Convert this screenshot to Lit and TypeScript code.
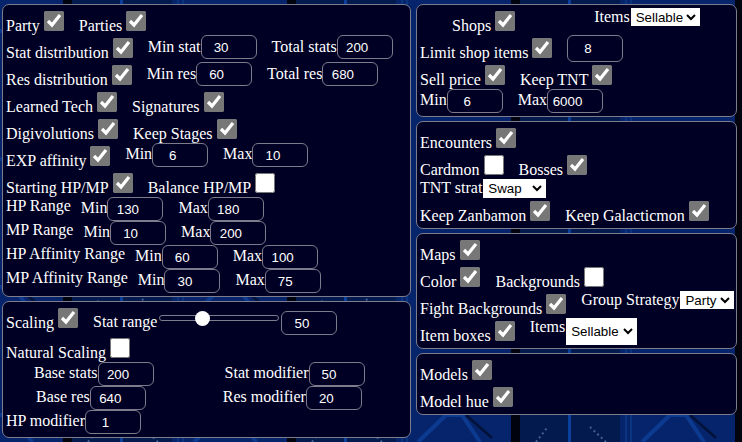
import { LitElement, html, css, svg } from "lit";
import { customElement } from "lit/decorators.js";

const cb = (on = true) => html`<input class="cb" type="checkbox" .checked=${on} />`;
const lab = (t: string, cls = "lo") => html`<label class=${cls}>${t}</label>`;
const num = (v: string, cls = "") => html`<input class="num ${cls}" type="number" .value=${v} />`;
const sel = (v: string, cls: string) => html`<select class="sel ${cls}"><option>${v}</option></select>`;

@customElement("app-root")
export class AppRoot extends LitElement {
  static styles = css`
    :host {
      display: block;
      position: relative;
      width: 742px;
      height: 442px;
      overflow: hidden;
      background: #041f5c;
      font-family: "Liberation Serif", "Times New Roman", serif;
      font-size: 16px;
      line-height: 18px;
      color: #fff;
    }
    .bg { position: absolute; inset: 0; width: 742px; height: 442px; }
    .page {
      position: relative;
      display: flex;
      align-items: flex-start;
      gap: 5px;
      padding: 4px 0 0 2px;
    }
    .col { display: flex; flex-direction: column; gap: 4px; }
    .left { width: 409px; }
    .right { width: 321px; }
    .panel {
      box-sizing: border-box;
      background: #000024;
      border: 1px solid #7c7c8c;
      border-radius: 7px;
      padding: 3px;
    }
    .row { display: flex; align-items: flex-start; }
    label { display: block; white-space: nowrap; }
    .lo { margin-top: 9px; }
    .m8 { margin-top: 8px; }
    .m3 { margin-top: 3px; }
    .m2 { margin-top: 2px; }
    .m0 { margin-top: 0; }
    .g { margin-left: 12px; }
    .g15 { margin-left: 15px; }
    .g10 { margin-left: 10px; }
    .i28 { margin-left: 28px; }
    .i30 { margin-left: 30px; }
    .i32 { margin-left: 32px; }
    .g71 { margin-left: 71px; }
    .g77 { margin-left: 77px; }
    .g76 { margin-left: 76px; }
    .cb {
      display: block;
      width: 20px;
      height: 20px;
      margin: 3px 3px 4px 4px;
      accent-color: #777;
      flex: none;
    }
    .num {
      display: block;
      box-sizing: border-box;
      width: 56px;
      height: 24px;
      margin: 0;
      padding: 1px 2px;
      flex: none;
      background: transparent;
      color: #fff;
      border: 1px solid #7c7c8c;
      border-radius: 6px;
      text-align: center;
      font: 13.333px "Liberation Sans", Arial, sans-serif;
    }
    .tall { height: 27px; margin-left: 12px; }
    .sel {
      display: block;
      flex: none;
      margin: 0 0 0 1px;
      box-sizing: border-box;
      background: #fff;
      color: #000;
      border: 1px solid #fff;
      border-radius: 0;
      font: 13.333px "Liberation Sans", Arial, sans-serif;
    }
    .s-items { width: 69px; height: 18px; }
    .s-swap { width: 63px; height: 19px; }
    .s-party { width: 54px; height: 18px; }
    .s-big { width: 71px; height: 27px; }
    .range {
      -webkit-appearance: none;
      appearance: none;
      display: block;
      flex: none;
      width: 120px;
      height: 16px;
      margin: 5px 2px 0 2px;
      background: transparent;
    }
    .range::-webkit-slider-runnable-track {
      height: 6px;
      box-sizing: border-box;
      background: #000024;
      border: 1px solid #7c7c8c;
      border-radius: 3px;
    }
    .range::-webkit-slider-thumb {
      -webkit-appearance: none;
      appearance: none;
      width: 15px;
      height: 15px;
      margin-top: -5.5px;
      border-radius: 50%;
      background: #fff;
    }
    .mt6 { margin-top: 6px; }
  `;

  private background() {
    return svg`
      <defs>
        <pattern id="tile" width="224" height="128" patternUnits="userSpaceOnUse" x="416" y="320">
          <rect width="224" height="128" fill="#06246c" />
          <rect x="104" width="100" height="128" fill="#021a4e" />
          <rect x="95" width="9" height="128" fill="#01040f" />
          <rect x="152" width="3" height="128" fill="#0a3f9c" />
          <rect x="209" width="2" height="128" fill="#0a3480" />
          <rect x="214" width="2" height="128" fill="#0a3480" />
          <path d="M2 122 L30 95 L46 95 L64 122" fill="none" stroke="#0b3a90" stroke-width="4" />
          <path d="M50 95 L76 118" fill="none" stroke="#03123a" stroke-width="3" />
          <path d="M120 122 L131 108" stroke="#3f5f95" stroke-width="2" stroke-dasharray="2 3" />
          <path d="M174 107 L190 122" stroke="#3f5f95" stroke-width="2" stroke-dasharray="2 3" />
        </pattern>
      </defs>
      <rect width="742" height="442" fill="url(#tile)" />
    `;
  }

  render() {
    return html`
      <svg class="bg" viewBox="0 0 742 442">${this.background()}</svg>
      <div class="page">
        <div class="col left">
          <section class="panel">
            <div class="row">${lab("Party")}${cb()}${lab("Parties", "lo g")}${cb()}</div>
            <div class="row">
              ${lab("Stat distribution")}${cb()}${lab("Min stat", "m3 g")}${num("30")}
              ${lab("Total stats", "m3 g15")}${num("200")}
            </div>
            <div class="row">
              ${lab("Res distribution")}${cb()}${lab("Min res", "m3 g")}${num("60")}
              ${lab("Total res", "m3 g15")}${num("680")}
            </div>
            <div class="row">${lab("Learned Tech")}${cb()}${lab("Signatures", "lo g")}${cb()}</div>
            <div class="row">${lab("Digivolutions")}${cb()}${lab("Keep Stages", "lo g")}${cb()}</div>
            <div class="row">
              ${lab("EXP affinity")}${cb()}${lab("Min", "m2 g")}${num("6")}
              ${lab("Max", "m2 g15")}${num("10")}
            </div>
            <div class="row">${lab("Starting HP/MP")}${cb()}${lab("Balance HP/MP", "lo g")}${cb(false)}</div>
            <div class="row">
              ${lab("HP Range", "m0")}${lab("Min", "m2 g10")}${num("130")}
              ${lab("Max", "m2 g15")}${num("180")}
            </div>
            <div class="row">
              ${lab("MP Range", "m0")}${lab("Min", "m2 g10")}${num("10")}
              ${lab("Max", "m2 g15")}${num("200")}
            </div>
            <div class="row">
              ${lab("HP Affinity Range", "m0")}${lab("Min", "m2 g10")}${num("60")}
              ${lab("Max", "m2 g15")}${num("100")}
            </div>
            <div class="row">
              ${lab("MP Affinity Range", "m0")}${lab("Min", "m2 g10")}${num("30")}
              ${lab("Max", "m2 g15")}${num("75")}
            </div>
          </section>
          <section class="panel">
            <div class="row">
              ${lab("Scaling")}${cb()}${lab("Stat range", "m8 g")}
              <input class="range" type="range" min="0" max="150" .value=${"50"} />
              ${num("50", "mt6")}
            </div>
            <div class="row">${lab("Natural Scaling")}${cb(false)}</div>
            <div class="row">
              ${lab("Base stats", "m2 i28")}${num("200")}
              ${lab("Stat modifier", "m2 g71")}${num("50")}
            </div>
            <div class="row">
              ${lab("Base res", "m2 i30")}${num("640")}
              ${lab("Res modifier", "m2 g77")}${num("20")}
            </div>
            <div class="row">${lab("HP modifier", "m2")}${num("1")}</div>
          </section>
        </div>
        <div class="col right">
          <section class="panel">
            <div class="row">
              ${lab("Shops", "lo i32")}${cb()}${lab("Items", "m0 g76")}${sel("Sellable", "s-items")}
            </div>
            <div class="row">${lab("Limit shop items")}${cb()}${num("8", "tall")}</div>
            <div class="row">${lab("Sell price")}${cb()}${lab("Keep TNT", "lo g")}${cb()}</div>
            <div class="row">
              ${lab("Min", "m2")}${num("6")}${lab("Max", "m2 g15")}${num("6000")}
            </div>
          </section>
          <section class="panel">
            <div class="row">${lab("Encounters")}${cb()}</div>
            <div class="row">${lab("Cardmon")}${cb(false)}${lab("Bosses", "lo g")}${cb()}</div>
            <div class="row">${lab("TNT strat", "m0")}${sel("Swap", "s-swap")}</div>
            <div class="row">
              ${lab("Keep Zanbamon")}${cb()}${lab("Keep Galacticmon", "lo g")}${cb()}
            </div>
          </section>
          <section class="panel">
            <div class="row">${lab("Maps")}${cb()}</div>
            <div class="row">${lab("Color")}${cb()}${lab("Backgrounds", "lo g")}${cb(false)}</div>
            <div class="row">
              ${lab("Fight Backgrounds")}${cb()}${lab("Group Strategy", "m0 g")}${sel("Party", "s-party")}
            </div>
            <div class="row">
              ${lab("Item boxes")}${cb()}${lab("Items", "m0 g")}${sel("Sellable", "s-big")}
            </div>
          </section>
          <section class="panel">
            <div class="row">${lab("Models")}${cb()}</div>
            <div class="row">${lab("Model hue")}${cb()}</div>
          </section>
        </div>
      </div>
    `;
  }
}
